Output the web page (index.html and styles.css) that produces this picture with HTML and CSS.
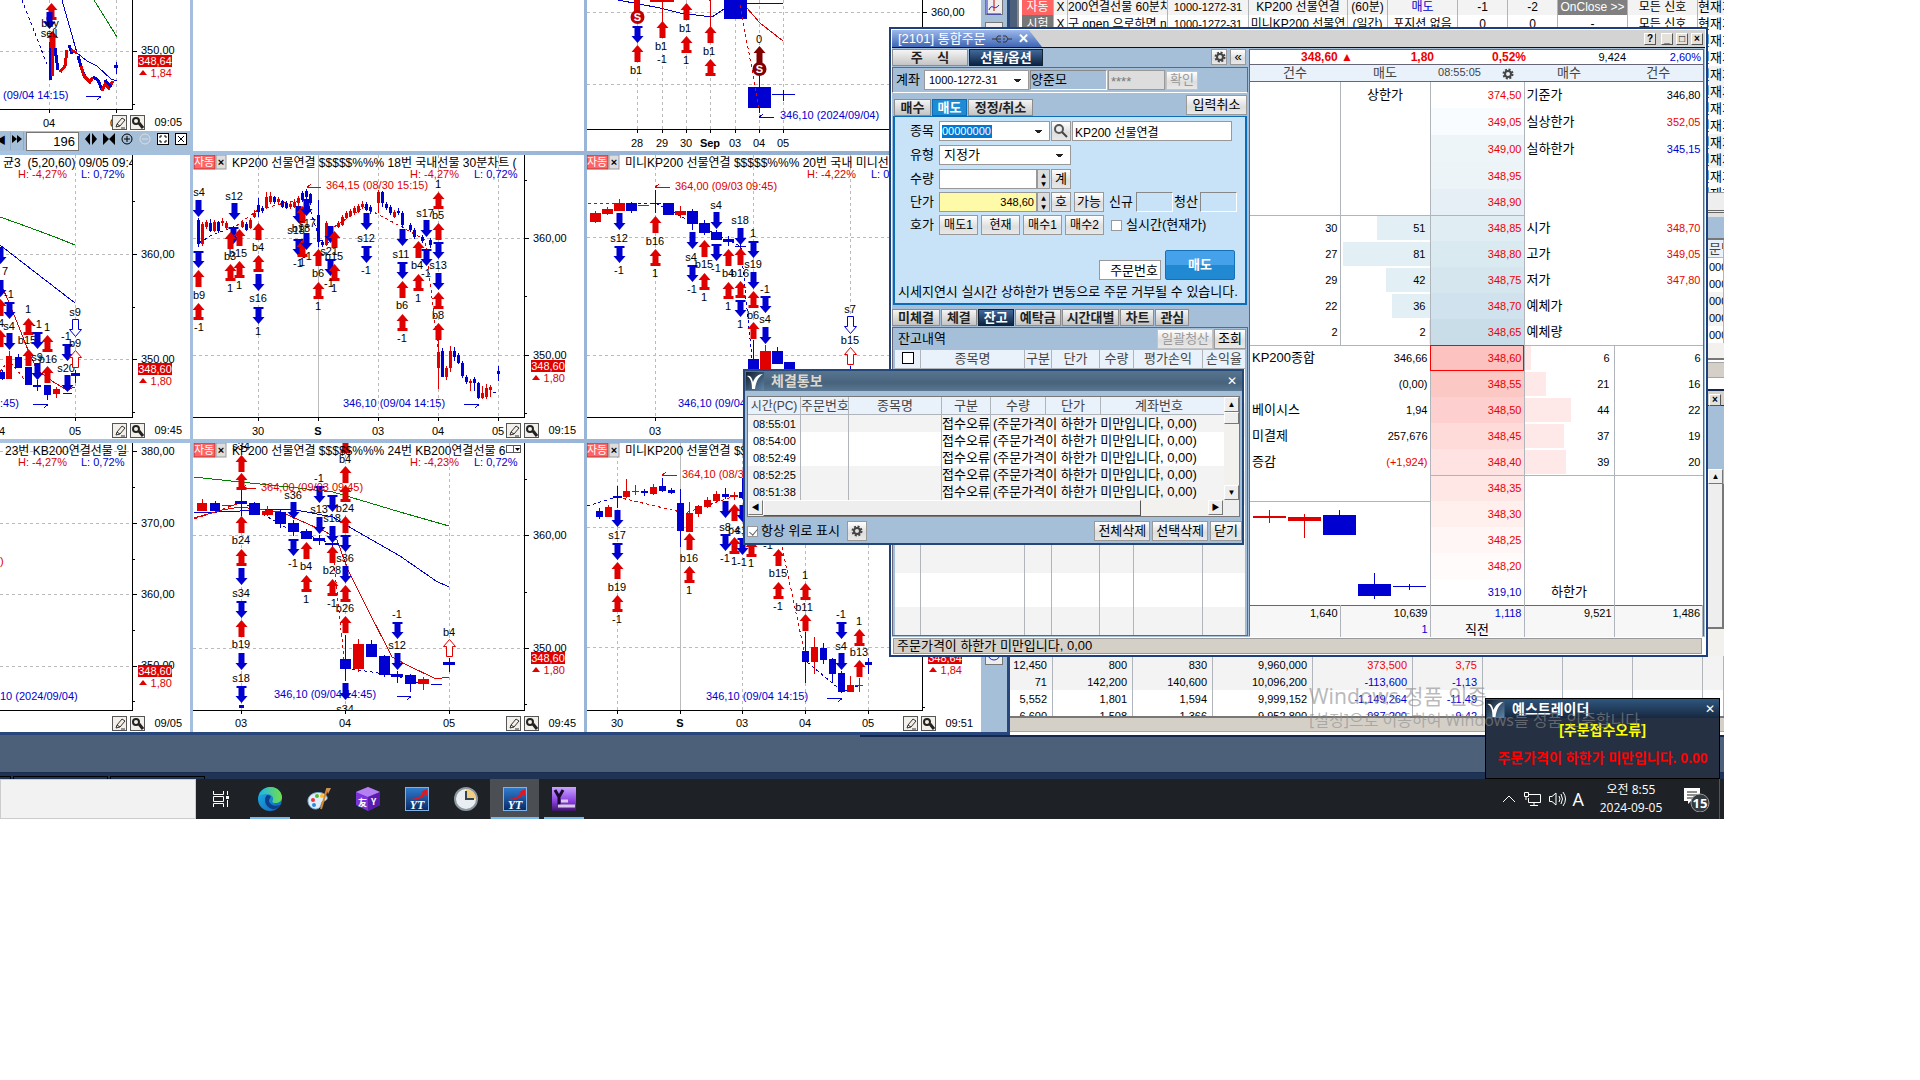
FILE: index.html
```html
<!DOCTYPE html>
<html lang="ko">
<head>
<meta charset="utf-8">
<title>통합주문</title>
<link rel="stylesheet" href="styles.css">
</head>
<body>
<svg width="0" height="0" class="defs" aria-hidden="true">
  <defs>
    <path id="m-u" d="M0 0 6 7H3V17H-3V7H-6Z"/>
    <path id="m-uf" d="M0 0 6 7H3V14H5V17H-5V14H-3V7H-6Z"/>
    <path id="m-d" d="M-3 0H3V10H6L0 17-6 10H-3Z"/>
    <path id="m-df" d="M-5 0H5V2H3V10H6L0 17-6 10H-3V2H-5Z"/>
    <g id="i-pencil" fill="none" stroke="#333"><path d="M3 11 4 8 9 2 12 4 7 10ZM4 8 7 10M8 12H12"/></g>
    <g id="i-mag" fill="none" stroke="#222"><circle cx="5" cy="5" r="3" stroke-width="2"/><path d="M8 7 12 12" stroke-width="3"/></g>
    <g id="i-gear"><circle cx="8" cy="8" r="3" fill="none" stroke="#444" stroke-width="2"/><circle cx="8" cy="8" r="4.500" fill="none" stroke="#444" stroke-width="2" stroke-dasharray="2 1.530"/></g>
    <linearGradient id="g-logo" x2="1" y2="1"><stop offset="0" stop-color="#111c2a"/><stop offset="1" stop-color="#5f87ad"/></linearGradient>
    <symbol id="i-logo" viewBox="0 0 18 18"><rect width="18" height="18" fill="url(#g-logo)"/><path d="M1 4C5 3 6 7 7 10 9 5 12 2 17 2 12 5 10 10 9 17H6C6 11 5 6 1 4Z" fill="#fff"/></symbol>
    <linearGradient id="g-yt" x2="0" y2="1"><stop offset="0" stop-color="#2f7dd0"/><stop offset="1" stop-color="#0a2a66"/></linearGradient>
    <symbol id="i-yt" viewBox="0 0 24 24"><rect x=".5" y=".5" width="23" height="23" fill="url(#g-yt)" stroke="#7fb2e6"/><path d="M5 12C12 12 16 9 18 6L16 5 22 2 22 9 20 7C17 12 11 14 5 12Z" fill="#e8141c"/><text x="12" y="22" text-anchor="middle" class="yt">YT</text></symbol>
    <linearGradient id="g-edge" x2="1" y2="1"><stop offset="0" stop-color="#1bb3e8"/><stop offset="1" stop-color="#1460b8"/></linearGradient>
    <linearGradient id="g-edge2" x2="1"><stop offset="0" stop-color="#23b5e6"/><stop offset="1" stop-color="#6fe04a"/></linearGradient>
    <linearGradient id="g-ps" x2="0" y2="1"><stop offset="0" stop-color="#c9a4ff"/><stop offset=".6" stop-color="#8a3fe0"/><stop offset="1" stop-color="#3c1466"/></linearGradient>
  </defs>
</svg>

<main class="screen">
<div class="desktop">

  <section class="win table-win">
    <table class="grid balances">
      <colgroup><col class="w193"><col class="w80"><col class="w80"><col class="w100"><col class="w100"><col class="w70"><col class="w80"><col class="w70"><col class="w70"><col></colgroup>
      <tr class="alt"><td>12,450<td>800<td>830<td>9,960,000<td class="red">373,500<td class="red">3,75<td><td><td><td></tr>
      <tr class="alt"><td>71<td>142,200<td>140,600<td>10,096,200<td class="blue">-113,600<td class="blue">-1,13<td><td><td><td></tr>
      <tr><td>5,552<td>1,801<td>1,594<td>9,999,152<td class="blue">-1,149,264<td class="blue">-11,49<td><td><td><td></tr>
      <tr><td>6,600<td>1,508<td>1,366<td>9,952,800<td class="blue">-987,200<td class="blue">-9,42<td><td><td><td></tr>
    </table>
    <div class="beige-bar"></div>
  </section>

  <section class="win edge-win">
    <div class="edge-title"><button class="cap" aria-label="닫기">×</button></div>
    <div class="edge-body"></div>
    <button class="scroll-btn" aria-label="위로">▲</button>
    <div class="edge-thumb"></div>
    <div class="edge-track"></div>
  </section>

  <section class="win orders-win">
    <div class="orders-top"></div>
    <table class="grid orders">
      <tr><th>문번</th></tr><tr><td>000</td></tr><tr><td>000</td></tr><tr class="alt"><td>000</td></tr><tr class="alt"><td>000</td></tr><tr><td>000</td></tr>
    </table>
    <div class="edge-track short"></div>
    <div class="beige-bar"></div>
  </section>

  <section class="win strategy-win">
    <table class="grid strategy">
      <colgroup><col class="w32"><col class="w14"><col class="w100"><col class="w81"><col class="w99"><col class="w40"><col class="w70"><col class="w50"><col class="w50"><col class="w70"><col class="w70"><col></colgroup>
      <tbody id="strategy"></tbody>
    </table>
    <div class="hbar"></div>
  </section>

  <section class="win chart-win">
    <div class="panes" id="panes">
      <article class="pane" data-pane="a1">
        <div class="pane-tools"><button aria-label="그리기"><svg width="13" height="13"><use href="#i-pencil"/></svg></button><button aria-label="확대"><svg width="13" height="13"><use href="#i-mag"/></svg></button><time>09:05</time></div>
        <div class="zoombar">
          <button aria-label="이전">◀</button><button class="sep" aria-label="다음"><svg width="12" height="14"><path d="M1 3V11L6 7ZM6 3V11L11 7Z"/></svg></button>
          <input value="196" aria-label="봉 개수">
          <button aria-label="넓게"><svg width="12" height="14"><path d="M5 1V13L0 7ZM7 1V13L12 7Z"/></svg></button>
          <button aria-label="좁게"><svg width="12" height="14"><path d="M0 1V13L6 7ZM12 1V13L6 7Z"/></svg></button>
          <button aria-label="확대"><svg width="12" height="14"><circle cx="6" cy="7" r="5" fill="none" stroke="#000"/><path d="M3 7H9M6 4V10" stroke="#000"/></svg></button>
          <button aria-label="축소" disabled><svg width="12" height="14"><circle cx="6" cy="7" r="5" fill="none" stroke="#ddd"/><path d="M3 7H9" stroke="#ddd"/></svg></button>
          <button aria-label="맞춤"><svg width="12" height="14"><rect x=".5" y="1.500" width="11" height="11" fill="#fff" stroke="#000"/><path d="M3 4H5M3 4V6M9 4H7M9 4V6M3 10H5M3 10V8M9 10H7M9 10V8" stroke="#000"/></svg></button>
          <button aria-label="닫기"><svg width="12" height="14"><rect x=".5" y="1.500" width="11" height="11" fill="#fff" stroke="#000"/><path d="M3 4 9 10M9 4 3 10" stroke="#000"/></svg></button>
        </div>
      </article>
      <article class="pane"></article>
      <article class="pane" data-pane="c1"></article>
      <article class="pane" data-pane="a2" data-time="09:45"></article>
      <article class="pane" data-pane="b2" data-time="09:15"></article>
      <article class="pane" data-pane="c2"></article>
      <article class="pane" data-pane="a3" data-time="09/05"></article>
      <article class="pane" data-pane="b3" data-time="09:45"></article>
      <article class="pane" data-pane="c3" data-time="09:51"></article>
    </div>
    <aside class="side">
      <button aria-label="차트 도구"><svg width="16" height="16"><path d="M1 0V14H15M3 10C6 2 8 12 13 5" fill="none" stroke="#22c"/><path d="M8 0V11" stroke="#c00"/></svg></button>
      <button aria-label="도구"></button>
      <button class="last" aria-label="시계"><svg width="16" height="16"><circle cx="8" cy="6" r="6" fill="none" stroke="#22c"/><path d="M8 2V7" stroke="#22c"/></svg></button>
    </aside>
  </section>

  <section class="win order-win">
    <header class="titlebar">
      <h1 class="tab-title">[2101] 통합주문 <svg width="20" height="10"><path d="M0 5H4M16 5H20M9 2H6L4 5 6 8H9M5 5H9M11 2H14L16 5 14 8H11M11 5H13" fill="none" stroke="#333"/></svg><button aria-label="탭 닫기">✕</button></h1>
      <div class="caps"><button class="cap" aria-label="도움말">?</button><button class="cap" aria-label="최소화">_</button><button class="cap" aria-label="최대화">□</button><button class="cap" aria-label="닫기">×</button></div>
    </header>
    <div class="order-main">
      <div class="ticket">
        <nav class="modes"><button class="tab w76">주&nbsp;&nbsp;&nbsp;&nbsp;식</button><button class="tab navy w74">선물/옵션</button><span class="grow"></span>
          <button class="btn ico" aria-label="설정"><svg width="16" height="16"><use href="#i-gear"/></svg></button><button class="btn ico" aria-label="접기">«</button></nav>
        <form class="account">
          <label for="acct">계좌</label><select id="acct" class="w105"><option>1000-1272-31</option></select><output class="sunken w77">양준모</output><input class="pw" type="text" value="****" aria-label="비밀번호" disabled><button type="button" class="btn" disabled>확인</button>
        </form>
        <nav class="sides"><button class="tab w37">매수</button><button class="tab sky w35">매도</button><button class="tab w65">정정/취소</button><span class="grow"></span><button class="btn cancel">입력취소</button></nav>
        <form class="entry">
          <div class="row"><label for="sym">종목</label><select id="sym" class="w111 sel"><option>00000000</option></select><button type="button" class="btn sq" aria-label="검색"><svg width="16" height="16"><circle cx="6" cy="6" r="4" fill="#eee" stroke="#555" stroke-width="2"/><path d="M9 9 14 14" stroke="#444" stroke-width="2"/></svg></button><input class="name" value="KP200 선물연결" aria-label="종목명"></div>
          <div class="row"><label for="kind">유형</label><select id="kind" class="w132"><option>지정가</option></select></div>
          <div class="row"><label for="qty">수량</label><span class="spin"><input id="qty"><i>▲<br>▼</i></span><button type="button" class="btn sq">계</button></div>
          <div class="row"><label for="px">단가</label><span class="spin"><input id="px" class="yellow" value="348,60"><i>▲<br>▼</i></span><button type="button" class="btn sq">호</button><button type="button" class="btn mid">가능</button><span class="lab">신규</span><output class="sunken w37"></output><span class="lab2">청산</span><output class="sunken w37"></output></div>
          <div class="row quick"><label>호가</label><button type="button" class="btn w39">매도1</button><button type="button" class="btn w39">현재</button><button type="button" class="btn w39">매수1</button><button type="button" class="btn w39">매수2</button><label class="live"><input type="checkbox">실시간(현재가)</label></div>
          <div class="submit"><output>주문번호</output><button type="button">매도</button></div>
          <p>시세지연시 실시간 상하한가 변동으로 주문 거부될 수 있습니다.</p>
        </form>
        <nav class="subtabs"><button class="tab">미체결</button><button class="tab">체결</button><button class="tab navy">잔고</button><button class="tab">예탁금</button><button class="tab">시간대별</button><button class="tab">차트</button><button class="tab">관심</button></nav>
        <div class="holdings">
          <div class="hold-head"><h2>잔고내역</h2><button class="btn" disabled>일괄청산</button><button class="btn">조회</button></div>
          <table class="grid hold">
            <colgroup><col class="w26"><col class="w104"><col class="w27"><col class="w48"><col class="w34"><col class="w69"><col></colgroup>
            <thead><tr><th><input type="checkbox" aria-label="전체 선택"></th><th>종목명</th><th>구분</th><th>단가</th><th>수량</th><th>평가손익</th><th>손익율</th></tr></thead>
            <tbody id="hold"></tbody>
          </table>
        </div>
      </div>
      <div class="book">
        <div class="quote"><b>348,60 ▲</b><b>1,80</b><b>0,52%</b><span>9,424</span><span class="blue">2,60%</span></div>
        <table class="ladder">
          <colgroup><col class="w90"><col class="w90"><col class="w94"><col class="w90"><col></colgroup>
          <thead><tr><th>건수</th><th>매도</th><th class="clock">08:55:05 <svg width="16" height="16"><use href="#i-gear"/></svg></th><th>매수</th><th>건수</th></tr></thead>
          <tbody id="ladder"></tbody>
          <tfoot><tr><td>1,640</td><td>10,639</td><td class="blue">1,118</td><td>9,521</td><td>1,486</td></tr><tr><td></td><td class="blue">1</td><td class="mid">직전</td><td></td><td></td></tr></tfoot>
        </table>
      </div>
    </div>
    <footer class="status">주문가격이 하한가 미만입니다, 0,00</footer>
  </section>

  <section class="win popup">
    <header><svg width="18" height="18"><use href="#i-logo"/></svg><h2>체결통보</h2><button aria-label="닫기">✕</button></header>
    <div class="popup-box">
      <div class="popup-rows">
        <table class="grid fills">
          <colgroup><col class="w53"><col class="w48"><col class="w93"><col class="w49"><col class="w55"><col class="w55"><col></colgroup>
          <thead><tr><th>시간(PC)</th><th>주문번호</th><th>종목명</th><th>구분</th><th>수량</th><th>단가</th><th>계좌번호</th></tr></thead>
          <tbody id="fills"></tbody>
        </table>
        <div class="vscroll"><button class="scroll-btn" aria-label="위로">▲</button><i></i><button class="scroll-btn" aria-label="아래로">▼</button></div>
      </div>
      <div class="hscroll"><button class="scroll-btn" aria-label="왼쪽">◀</button><i></i><span></span><button class="scroll-btn" aria-label="오른쪽">▶</button><b></b></div>
    </div>
    <footer><label><input type="checkbox" checked>항상 위로 표시</label><button class="btn gear" aria-label="설정"><svg width="16" height="16"><use href="#i-gear"/></svg></button><span class="grow"></span><button class="btn">전체삭제</button><button class="btn">선택삭제</button><button class="btn">닫기</button></footer>
  </section>

  <section class="win toast">
    <header><svg width="19" height="18"><use href="#i-logo"/></svg><h2>예스트레이더</h2><button aria-label="닫기">✕</button></header>
    <strong>[주문접수오류]</strong>
    <p>주문가격이 하한가 미만입니다. 0.00</p>
  </section>

  <div class="watermark"><b>Windows 정품 인증</b><span>[설정]으로 이동하여 Windows를 정품 인증합니다.</span></div>
  <div class="app-tabs"><i></i><i></i><i></i></div>
</div>

<footer class="taskbar">
  <input class="search" aria-label="검색">
  <button aria-label="작업 보기"><svg width="24" height="24"><g fill="none" stroke="#fff"><path d="M4.500 4V7.500H14.500V4M4.500 20V16.500H14.500V20M4.500 9.500H14.500V14.500H4.500ZM18.500 4V8M18.500 13V20"/></g><rect x="17" y="9" width="3" height="3" fill="#fff"/></svg></button>
  <button class="open" aria-label="Edge"><svg width="24" height="24"><circle cx="12" cy="12" r="12" fill="url(#g-edge)"/><path d="M1 9C3 2 9 0 13 0 20 0 24 6 24 10 24 14 21 16 17 16 14 16 14 14 15 13 16 10 13 7 9 7 5 7 2 8 1 9Z" fill="url(#g-edge2)"/><path d="M9 8C5 12 7 20 14 22 18 23 21 20 22 18 17 20 12 18 11 14 11 12 12 11 13 10 12 8 10 8 9 8Z" fill="#0c3f8c"/></svg></button>
  <button aria-label="그림판"><svg width="24" height="24"><path d="M1 15C0 8 8 4 15 6 21 8 22 13 17 14 14 14 15 17 13 20 10 24 2 22 1 15Z" fill="#dfeefa" stroke="#7aa6cc"/><circle cx="6" cy="13" r="2" fill="#e33"/><circle cx="10" cy="9" r="2" fill="#5b3"/><circle cx="7" cy="18" r="2" fill="#38d"/><circle cx="15" cy="9" r="2" fill="#fb2"/><path d="M20 2 14 22" stroke="#d9852c" stroke-width="2"/><path d="M19 1 24 1 21 7Z" fill="#c8935a"/></svg></button>
  <button aria-label="프로그램"><svg width="24" height="24"><path d="M12 0 24 5V18L12 24 0 18V5Z" fill="#7b35d8"/><path d="M12 0 24 5 12 10 0 5Z" fill="#b581f2"/><path d="M12 10V24L24 18V5Z" fill="#5a1cae"/><text x="2" y="19" class="cube">友</text><text x="15" y="18" class="cube">Y</text></svg></button>
  <button aria-label="YT"><svg width="24" height="24"><use href="#i-yt"/></svg></button>
  <button aria-label="시계"><svg width="24" height="24"><circle cx="12" cy="12" r="11" fill="#e9eef2" stroke="#8c979f" stroke-width="2"/><path d="M12 2A10 10 0 0 1 22 12H12Z" fill="#f0cf85"/><path d="M12 4V12H20" fill="none" stroke="#345" stroke-width="2"/></svg></button>
  <button class="open active" aria-label="YT"><svg width="24" height="24"><use href="#i-yt"/></svg></button>
  <button class="open" aria-label="Y Trader"><svg width="24" height="24"><rect width="24" height="24" fill="url(#g-ps)"/><path d="M3 3 7 10 11 3M7 10V18" fill="none" stroke="#1a0a30" stroke-width="3"/><path d="M9 14H16M6 19H23" stroke="#d9c8ee" stroke-width="3"/></svg></button>
  <div class="tray">
    <svg width="14" height="12"><path d="M1 9 7 3 13 9" fill="none" stroke="#fff"/></svg>
    <svg width="18" height="16"><path d="M6 3.500H17.500V11.500H5.500V7M11 12V14M7 14.500H15M1.500 1.500H5.500V5.500H1.500ZM3 6V9" fill="none" stroke="#fff"/></svg>
    <svg width="18" height="16"><path d="M1.500 5.500H4L8 2V14L4 10.500H1.500ZM11 5Q13 8 11 11M13 3Q16 8 13 13M15 1Q20 8 15 15" fill="none" stroke="#fff"/></svg>
    <span class="ime">A</span>
    <time>오전 8:55<br>2024-09-05</time>
    <svg width="30" height="26"><path d="M2 2H18V15H9L6 18V15H2Z" fill="#fff"/><path d="M5 6H15M5 9H15M5 12H12" stroke="#222"/><circle cx="18" cy="17" r="9" fill="#333b40" stroke="#999"/><text x="18" y="22" text-anchor="middle" class="num">15</text></svg>
  </div>
</footer>
</main>
<script src="app.js"></script>
</body>
</html>
```
FILE: styles.css
```css
* { box-sizing: border-box; }
body { margin: 0; background: #fff; color: #000; font: 13px/16px "Liberation Sans", "Noto Sans CJK KR", sans-serif; }
h1, h2, p { margin: 0; font-size: 13px; font-weight: 400; }
button, input, select, output { font: inherit; color: inherit; }
button { padding: 0; white-space: nowrap; }
.defs { position: absolute; }
.red { color: #e00; }
.blue { color: #0000d0; }
.grow { flex: 1; }

.screen { max-width: 1724px; }
.desktop { position: relative; min-height: 779px; overflow: hidden; background: linear-gradient(#4d6079 772px, #18294a 772px, #1f3354 773px); }
.win { position: absolute; overflow: hidden; background: #fff; }

.w14 { width: 14px; } .w26 { width: 26px; } .w27 { width: 27px; } .w32 { width: 32px; } .w34 { width: 34px; }
.w35 { width: 35px; } .w37 { width: 37px; } .w39 { width: 39px; } .w40 { width: 40px; } .w48 { width: 48px; }
.w49 { width: 49px; } .w50 { width: 50px; } .w53 { width: 53px; } .w55 { width: 55px; } .w65 { width: 65px; }
.w69 { width: 69px; } .w70 { width: 70px; } .w74 { width: 74px; } .w76 { width: 76px; } .w77 { width: 77px; }
.w80 { width: 80px; } .w81 { width: 81px; } .w90 { width: 90px; } .w93 { width: 93px; } .w94 { width: 94px; }
.w99 { width: 99px; } .w100 { width: 100px; } .w104 { width: 104px; } .w105 { width: 105px; } .w111 { width: 111px; }
.w132 { width: 132px; } .w193 { width: 193px; }

.grid { width: 100%; table-layout: fixed; border-collapse: separate; border-spacing: 0; background: #fff; }
.grid td, .grid th { height: 17px; padding: 0; overflow: hidden; border-right: 1px solid #b0b4bb; font-weight: 400; line-height: 16px; white-space: nowrap; }
.grid th { height: 18px; border-bottom: 1px solid #b0b4bb; background: #e9f1fb; color: #444; text-align: center; }
.alt { background: #f3f3f3; }
.beige-bar { height: 16px; margin: 2px 0 4px; border: 2px solid #a5a5a5; border-width: 1px 0; background: #d4d0c8; }

.table-win { left: 860px; right: 0; top: 656px; height: 81px; border-bottom: 2px solid #14284f; }
.balances td { padding-right: 5px; font-size: 11px; text-align: right; }
.table-win .beige-bar { position: relative; margin-top: -8px; border-top: 2px solid #777; }
.edge-win { left: 1700px; right: 0; top: 389px; height: 267px; border-top: 2px solid #14284f; background: #a5bfd9; display: flex; flex-direction: column; padding-left: 8px; }
.edge-title { height: 15px; padding-left: 1px; border-bottom: 1px solid #333; background: #d4d0c8; }
.edge-body { height: 63px; }
.edge-thumb { height: 145px; background: #eee; border-right: 2px solid #777; border-bottom: 2px solid #777; }
.edge-track { flex: 1; background: #f3f1ee; }
.edge-track.short { height: 17px; flex: none; border-bottom: 2px solid #777; }
.scroll-btn { width: 15px; height: 15px; border: 1px solid; border-color: #fff #777 #777 #fff; background: #eee; font-size: 8px; line-height: 12px; }
.orders-win { left: 1700px; right: 0; top: 213px; height: 176px; }
.orders-top { height: 27px; border-top: 4px solid #e0e0e0; border-bottom: 2px solid #777; background: #a5bfd9; }
.orders td, .orders th { padding-left: 9px; text-align: left; }
.orders td { font-size: 11px; }
.strategy-win { left: 1017px; right: 0; top: -2px; height: 215px; border-left: 2px solid #888; padding-left: 3px; }
.strategy td { font-size: 12px; text-align: center; }
.strategy td:nth-child(4) { font-size: 11px; }
.strategy td:last-child { font-size: 13px; text-align: left; border: 0; }
.strategy .on { background: #ff6464; color: #fff; }
.strategy .test { background: #777; color: #fff; }
.strategy .wide { text-align: left; }
.strategy .close { background: #808080; color: #fff; }
.strategy-win .hbar { position: absolute; left: 0; right: 0; top: 194px; height: 21px; border-top: 1px solid #999; border-bottom: 3px double #666; background: #eee; }

.chart-win { left: 0; top: 0; width: 1010px; height: 735px; display: flex; border-right: 3px solid #27477d; border-bottom: 3px solid #27477d; }
.panes { display: grid; grid-template-columns: 190px 391px 394px; grid-template-rows: 151px 284px 289px; gap: 4px 3px; background: linear-gradient(90deg, #a9c4e2, #8fabcf); }
.pane { position: relative; overflow: hidden; background: #fff; }
.pane > svg { display: block; }
.pane text { font: 11px "Liberation Sans", "Noto Sans CJK KR", sans-serif; }
.pane text.title { font-size: 12px; }
.pane text.bold { font-weight: 700; }
.pane-tools { position: absolute; right: 8px; bottom: 1px; display: flex; gap: 3px; align-items: center; background: #fff; }
.pane-tools button { display: flex; width: 15px; height: 15px; padding: 0; border: 1px solid #555; background: #f3f0ea; }
.pane-tools time { min-width: 28px; margin-left: 6px; font-size: 11px; text-align: right; }
[data-pane=a1] .pane-tools { bottom: 21px; }
.zoombar { position: absolute; left: 0; right: 0; bottom: 0; height: 20px; display: flex; align-items: center; gap: 6px; padding-right: 4px; background: #a5bfd9; }
.zoombar button { width: 12px; height: 18px; border: 0; background: none; font-size: 10px; }
.zoombar button:first-child { width: 8px; margin-left: -4px; }
.zoombar .sep { width: 20px; margin-right: -4px; border: 1px solid #8ea9c6; border-width: 0 1px; }
.zoombar input { width: 53px; height: 19px; padding: 0 3px; border: 1px solid #777; text-align: right; }
.side { display: flex; flex-direction: column; gap: 7px; width: 26px; padding: 0 4px 67px; background: #a5bfd9; }
.side button { width: 18px; height: 18px; border: 1px solid #777; background: #eee; }
.side button:first-child { height: 15px; border-top: 0; }
.side .last { margin-top: auto; }

.btn { border: 1px solid #999; background: linear-gradient(#fff, #dedede 60%, #e8e8e8); height: 20px; display: flex; align-items: center; justify-content: center; }
.btn:disabled { color: #999; border-color: #c3c3c3; }
.tab { height: 17px; border: 1px solid #8c8c8c; background: linear-gradient(#f5f5f5, #c4c4c4); color: #222; font-weight: 700; line-height: 15px; }
.tab.navy { border-color: #123; background: linear-gradient(#41699c, #0d2340); color: #fff; }
.tab.sky { border-color: #0b6cb8; background: #1d8cd4; color: #fff; }

.order-win { left: 889px; top: 27px; width: 819px; height: 630px; display: flex; flex-direction: column; border: 2px solid #1d3f7c; background: #fff; padding: 1px; }
.titlebar { display: flex; justify-content: space-between; height: 18px; border-bottom: 1px solid #111; background: #d3d3d3; }
.tab-title { display: flex; align-items: center; gap: 6px; width: 150px; padding-left: 6px; background: linear-gradient(#9db8ea, #3f66b4); clip-path: polygon(0 0, 137px 0, 150px 100%, 0 100%); color: #fff; white-space: nowrap; }
.tab-title button { border: 0; background: none; font-weight: 700; }
.caps { display: flex; align-items: center; gap: 3px; padding-right: 2px; }
.cap { width: 12px; height: 12px; border: 1px solid; border-color: #fff #555 #555 #fff; background: #e4e1da; font-size: 10px; font-weight: 700; line-height: 8px; }
.caps .cap:first-child { margin-right: 2px; }
.order-main { display: flex; flex: 1; min-height: 0; padding: 1px 1px 1px 0; background: #a5bfd9; }
.ticket { display: flex; flex-direction: column; width: 356px; }
.modes { display: flex; height: 18px; gap: 1px; }
.modes .ico { width: 16px; height: 16px; margin-right: 2px; }
.account { display: flex; align-items: center; height: 26px; padding-left: 3px; border: 1px solid #667; border-bottom-color: #fff; gap: 1px; }
.account label { width: 27px; }
.account select, .sel { font-size: 11px; }
select, input { border: 1px solid #999; background: #fff; height: 20px; padding: 0 4px; }
select { appearance: none; padding-right: 14px; border-radius: 0; background: linear-gradient(#222, #222) no-repeat right 7px top 8px / 7px 1px, linear-gradient(#222, #222) no-repeat right 8px top 9px / 5px 1px, linear-gradient(#222, #222) no-repeat right 9px top 10px / 3px 1px, #fff; }
.sunken { display: block; height: 20px; border: 1px solid; border-color: #888 #fff #fff #888; padding-top: 1px; }
.account .pw { width: 57px; background: #ddd; color: #777; padding: 3px 2px 0; }
.account .btn { width: 32px; height: 19px; }
.sides { display: flex; align-items: flex-end; gap: 1px; height: 23px; padding: 0 1px 0 2px; }
.sides .cancel { width: 61px; align-self: flex-end; margin-bottom: 1px; }
.entry { height: 189px; margin: 0 1px 0 1px; padding: 4px 3px 0; border: 2px solid #0b6cb8; border-width: 1px 2px 2px; background: #c8e3f8; }
.row { display: flex; align-items: center; height: 20px; margin-bottom: 4px; }
.row:nth-child(n+3) { margin-bottom: 3px; }
.row > label:first-child { width: 41px; padding-left: 12px; }
.row .sq { width: 20px; margin-left: 1px; }
.row .name { width: 160px; margin-left: 1px; padding-left: 2px; font-size: 12px; }
.row .mid { width: 30px; margin: 0 5px 0 3px; }
.row .lab { width: 27px; } .row .lab2 { width: 27px; padding-left: 1px; }
.sel { color: #fff; background: linear-gradient(#222, #222) no-repeat right 7px top 8px / 7px 1px, linear-gradient(#222, #222) no-repeat right 8px top 9px / 5px 1px, linear-gradient(#222, #222) no-repeat right 9px top 10px / 3px 1px, linear-gradient(#0078d7, #0078d7) no-repeat 2px center / 50px 13px, #fff; padding-left: 2px; }
.spin { display: flex; width: 111px; }
.spin input { width: 98px; padding-right: 2px; font-size: 11px; text-align: right; }
.spin .yellow { background: #fffaa8; }
.spin i { width: 13px; border: 1px solid #999; background: #ddd; font: 6px/9px "DejaVu Sans"; text-align: center; }
.quick .btn { margin-right: 3px; font-size: 12px; }
.live { display: flex; align-items: center; gap: 4px; margin-left: 4px; }
.live input { width: 11px; height: 11px; margin: 0; appearance: none; padding: 0; }
.submit { display: flex; justify-content: flex-end; align-items: flex-end; gap: 4px; height: 34px; margin-top: 11px; padding-right: 7px; }
.submit output { width: 62px; height: 20px; padding: 2px 2px 0 0; border: 1px solid #999; background: #fff; text-align: right; }
.submit button { width: 70px; height: 30px; border: 1px solid #1470b8; border-radius: 2px; background: linear-gradient(#45a2ea 50%, #2089d2 50%); color: #fff; font-weight: 700; }
.entry p { padding-top: 4px; white-space: nowrap; }
.subtabs { display: flex; gap: 1px; margin-top: 4px; height: 18px; }
.subtabs .tab { padding: 0 5px; }
.subtabs .tab:nth-child(n+4) { padding: 0 4px; }
.holdings { flex: 1; display: flex; flex-direction: column; min-height: 0; overflow: hidden; padding: 1px 1px 1px 2px; border: 1px solid #667; }
.hold-head { display: flex; align-items: center; gap: 1px; margin-bottom: 1px; }
.hold-head h2 { flex: 1; padding-left: 3px; }
.hold-head .btn { padding: 0 3px; }
.hold input { appearance: none; width: 12px; height: 12px; margin: 2px 0 0; border: 1px solid #000; padding: 0; }
.hold td { height: 34px; }
.hold tr:nth-child(even) td { background: #f3f3f3; }
.book { flex: 1; background: #fff; margin-left: 1px; border: 1px solid #667; }
.quote { display: grid; grid-template-columns: 103px 81px 92px 100px 1fr; height: 15px; line-height: 15px; padding-right: 2px; border-bottom: 1px solid #667; font-size: 11px; text-align: right; }
.quote b { color: #e00; font-size: 12px; }
.ladder { width: 100%; table-layout: fixed; border-collapse: collapse; }
.ladder th { height: 16px; padding: 0; border-bottom: 1px solid #667; background: #e9f1fb; color: #444; font-weight: 400; line-height: 14px; }
.ladder .clock { font-size: 11px; }
.ladder th svg { height: 14px; margin-left: 16px; vertical-align: -4px; }
.ladder td { height: 26px; padding: 0 2px; font-size: 11px; text-align: right; }
.ladder .tall td { height: 27px; }
.ladder td.px { border: 1px solid #b0b4bb; border-width: 0 1px; color: #e00; }
.ladder td.now { outline: 1px solid #f00; outline-offset: -1px; }
.ladder td.px.low { color: #0000d0; }
.ladder td.l { font-size: 13px; text-align: left; }
.ladder td.v { border-right: 1px solid #b0b4bb; }
.ladder td.pad { padding-right: 4px; }
.ladder .line td { border-bottom: 1px solid #b0b4bb; }
.ladder td.mid { font-size: 13px; text-align: center; }
.ladder td.bb { border-bottom: 1px solid #b0b4bb; }
.ladder td.bar { background: linear-gradient(var(--c), var(--c)) no-repeat var(--side) center / var(--w) 24px; }
.ladder td.candles { padding: 0; vertical-align: top; }
.candles svg { display: block; }
.ladder tfoot td { height: 16px; background: #f7f7f7; border-right: 1px solid #b0b4bb; line-height: 15px; }
.ladder tfoot tr:first-child td { border-top: 1px solid #667; }
.status { height: 16px; border: 1px solid #999; background: #d4d0c8; line-height: 13px; padding-left: 3px; margin: 1px 3px 0 1px; }

.popup { left: 743px; top: 369px; width: 501px; height: 176px; border: 2px solid #24477a; background: #a5bfd9; }
.popup > header, .toast > header { display: flex; align-items: center; gap: 7px; height: 20px; padding: 1px; background: linear-gradient(#57748f, #48637c 60%, #5a7894); color: #ddd8cc; }
.popup h2, .toast h2 { flex: 1; font-size: 14px; font-weight: 700; }
.popup header button, .toast header button { width: 18px; border: 0; background: none; color: #fff; font-size: 12px; }
.popup-box { margin: 5px 2px 0; border: 1px solid #777; background: #fff; }
.popup-rows { display: flex; }
.fills th:first-child { font-size: 12px; }
.fills td:first-child { padding-left: 5px; font-size: 11px; }
.fills td:last-child { padding-left: 2px; border: 0; }
.fills th:last-child { padding-right: 7px; border-right: 0; }
.fills tr.even td { background: #f3f3f3; }
.vscroll { display: flex; flex-direction: column; width: 15px; flex: none; background: #f3f1ee; }
.vscroll i { height: 12px; border: 1px solid; border-color: #fff #777 #777 #fff; background: #eee; }
.vscroll .scroll-btn:last-child { margin-top: auto; }
.hscroll { display: flex; height: 16px; background: #f3f1ee; }
.hscroll i { width: 378px; background: #eee; border: 1px solid; border-color: #fff #555 #555 #fff; }
.hscroll span { flex: 1; }
.hscroll b { width: 16px; background: #eee; }
.popup footer { display: flex; align-items: center; gap: 2px; margin: 4px 0 0 2px; }
.popup footer label { display: flex; align-items: center; gap: 3px; }
.popup footer input { position: relative; appearance: none; width: 11px; height: 11px; margin: 0; padding: 0; }
.popup footer input::after { content: ""; position: absolute; left: 3px; top: 0; width: 4px; height: 7px; border: solid #666; border-width: 0 1px 1px 0; transform: rotate(40deg); }
.popup footer .btn { padding: 0 3px; }
.popup footer .gear { width: 20px; padding: 0; margin-left: 5px; }

.toast { left: 1485px; top: 698px; width: 235px; height: 81px; border: 1px solid #000; background: #253043; text-align: center; }
.toast > header { height: 19px; padding: 0; background: linear-gradient(#2f567e, #17283f); color: #fff; text-align: left; }
.toast strong { display: block; margin-top: 4px; color: #ff0; font-size: 14px; }
.toast p { margin-top: 12px; color: #f00; font-size: 14px; font-weight: 700; }
.watermark { position: absolute; left: 1309px; top: 682px; display: flex; flex-direction: column; color: rgba(140, 140, 140, .6); font-family: "Noto Sans", "Noto Sans CJK KR", sans-serif; white-space: nowrap; }
.watermark b { font-size: 21px; font-weight: 400; line-height: 28px; }
.watermark span { font-size: 16px; line-height: 20px; }
.app-tabs { position: absolute; left: 0; bottom: 0; display: flex; gap: 2px; }
.app-tabs i { width: 95px; height: 3px; border: 1px solid #000; border-bottom: 0; }
.app-tabs i:first-child { width: 11px; border-left: 0; }

.taskbar { display: flex; align-items: stretch; height: 40px; background: #1e2227; color: #fff; }
.taskbar .search { width: 196px; height: 40px; border: 1px solid #ccc; background: #f2f2f2; }
.taskbar > button { display: flex; align-items: center; justify-content: center; width: 49px; border: 0; background: none; color: #fff; }
.taskbar .open { background: linear-gradient(#76b9ed, #76b9ed) no-repeat center bottom / 40px 2px; }
.taskbar .active { background: linear-gradient(#76b9ed, #76b9ed) no-repeat center bottom / 48px 2px, #4b4e52; }
.yt { font: italic 700 12px "Liberation Serif", serif; fill: #fff; }
.cube { font: 700 9px "Noto Sans CJK KR", sans-serif; fill: #fff; }
.num { font: 700 13px "Open Sans", sans-serif; fill: #fff; }
.tray { display: flex; align-items: center; gap: 7px; margin-left: auto; padding-right: 7px; margin-right: 4px; border-right: 1px solid #555; font-family: "Open Sans", "Noto Sans CJK KR", sans-serif; }
.tray .ime { font-size: 18px; }
.tray time { width: 80px; margin-right: 4px; font-size: 12px; line-height: 18px; text-align: center; }
```
FILE: app.js
```
const RED = '#e00000', BLUE = '#0000d0';

// Each pane lists its drawing in window coordinates; box is [left, top, width, height].
const panes = {
  a1: { box: [0, 0, 190, 151], axis: [132, 109], h: [51], v: [49, 116], ticks: [104],
    lines: [['blue', '62,0 77,53 87,61 97,66 111,79 117,81'], ['green', '94,0 117,37'], ['blue', '22,0 48,67', 1]],
    thick: [['b', '50,42 50,80'], ['r', '52,40 52,76'], ['b', '55,48 58,70'], ['r', '60,72 65,66 67,50'], ['b', '69,45 72,54'], ['r', '71,50 77,53'], ['b', '78,56 82,70 87,80'], ['r', '81,66 84,76 90,82 93,77'], ['b', '93,77 98,80 102,90'], ['r', '102,91 105,84 109,88 113,81'], ['b', '105,80 111,87']],
    candles: 'b116,65,68,62,74,4',
    marks: 'uf@51,3 d@49,12 u@52,31 buy@50,27 sell@49,37', x: '04@49 0@113', xy: 127, ys: '350,00@54', price: [138, 55, '348,64', '1,84'],
    notes: [[3, 99, '(09/04 14:15)', BLUE]], arrows: [[86, 101, 96, BLUE]] },
  c1: { box: [587, 0, 394, 151], axis: [922, 129], h: [12, 84], v: [637, 662, 686, 710, 735, 759, 783], ticks: [12],
    lines: [['blue', '618,0 660,8 680,13 712,17 730,5 760,3 783,3'], ['red', '740,0 760,23 783,41']], over: [['red', '740,5 759,107', 1]],
    candles: 'r662,0,2,0,22,24 r710,0,0,0,27,2 b735,0,19,0,19,23 b759,87,108,76,113,23 b783,94,95,90,101,23 r637,0,11,0,11,6',
    marks: 'df@637,26 u@637,45 b1@636,74 u@662,21 b1@661,50 -1@662,63 u@686,3 b1@685,32 uf@686,36 1@686,64 u@710,26 b1@709,55 uf@710,59 0@759,43 uk@759,46',
    stops: [[637, 17, '#c00000'], [759, 69, '#800000']],
    x: '28@637 29@662 30@686 Sep@710 03@735 04@759 05@783', xy: 147, ys: '360,00@16',
    notes: [[780, 119, '346,10 (2024/09/04)', BLUE]], arrows: [[774, 759, 117, BLUE]] },
  a2: { box: [0, 155, 190, 284], axis: [132, 417], h: [254, 359], v: [75], ticks: [201, 307, 412],
    lines: [['green', '0,217 28,227 55,237 75,245'], ['blue', '0,245 18,259 75,303'], ['red', '0,283 9,302 28,350 37,370 55,383 67,390 75,387'], ['red', '0,372 9,360 28,384', 1]],
    candles: 'r9,356,379,351,379,6 b18,357,368,354,368,7 b28,367,385,367,385,7 b37,385,387,380,391,8 b47,385,395,385,400,7 r56,389,394,387,398,7 b67,393,394,393,394,9 b75,373,376,370,383,9 b2,372,379,370,380,5',
    marks: 'd@0,247 7@5,275 d@0,280 u@0,299 -1@9,298 df@9,302 s4@9,330 d@9,333 4@1,327 u@0,330 1@28,313 uf@28,318 b15@27,344 u@28,349 -1@37,328 df@37,332 1@47,331 uf@47,335 s9@37,361 b16@48,363 d@37,363 u@47,366 -1@66,340 df@67,344 s20@66,372 d@67,375 s9@75,316 hd@75,319 b9@75,347 hu@75,350',
    title: [3, '균3  (5,20,60) 09/05 09:4'], hl: [18, 81, '4,27'], x: '4@2 05@75', xy: 435, ys: '360,00@258 350,00@363', price: [138, 363, '348,60', '1,80'],
    notes: [[0, 407, ':45)', BLUE]], arrows: [[33, 48, 404, BLUE]] },
  a3: { box: [0, 443, 190, 289], axis: [132, 710], h: [451, 523, 594, 666], v: [], ticks: [487, 559, 630, 701],
    candles: '', marks: '', title: [5, '23번 KB200연결선물 일'], hl: [18, 81, '4,27'], x: '', xy: 727, ys: '380,00@455 370,00@527 360,00@598 350,00@669', price: [138, 665, '348,60', '1,80'],
    notes: [[0, 700, '10 (2024/09/04)', BLUE], [0, 565, ')', RED]], arrows: [] },
  b2: { box: [193, 155, 391, 284], axis: [524, 417], h: [238, 355], v: [258, 378, 438, 498], solid: 318, ticks: [180, 296, 413],
    lines: [['blue', '199,243 212,235 236,226', 1], ['red', '236,226 258,210 288,202 307,200', 1], ['blue', '307,200 320,240 330,243', 1], ['red', '334,227 364,207 402,227 425,240 438,348', 1]],
    candles: 'b198,220,244,218,247 r202,224,244,222,246 r206,222,227,220,229 b210,223,231,219,232 r214,222,231,220,232 b218,222,231,221,233 r222,221,223,218,226 r226,223,228,221,230 r242,222,227,220,228 b246,224,230,222,231 r250,220,228,218,229 r254,213,217,210,218 b258,205,212,198,217 b262,208,211,206,213 r266,197,208,192,209 r270,196,202,192,204 b274,197,202,196,204 r278,199,202,197,204 b282,201,207,200,208 b286,203,208,201,209 r290,204,207,202,209 r294,202,207,199,208 r298,198,203,196,206 b302,193,200,191,202 b306,191,197,189,199 b310,194,203,193,205 b318,215,242,200,247 b322,242,245,240,247 r326,223,245,221,246 r338,223,227,221,228 r342,217,225,215,226 r346,213,218,211,219 r350,211,216,209,217 r354,208,213,206,215 r358,206,212,204,213 r362,204,207,201,209 b366,204,210,202,211 b370,207,211,205,214 r378,192,203,190,213 b382,192,203,191,207 b386,204,208,202,210 b390,207,213,205,215 r394,212,217,210,218 b398,211,213,208,215 b402,213,225,211,228 b410,225,230,223,232 b414,230,237,228,239 b422,237,241,235,243 b430,240,245,238,248 r438,352,368,340,389 b442,351,377,348,377 r446,368,377,366,380 r450,351,368,346,372 b454,351,357,347,361 b458,355,363,353,364 b462,363,376,361,378 b466,377,382,375,384 r470,381,383,379,391 b474,379,383,377,391 b478,383,398,382,399 r482,393,398,386,399 r486,388,397,384,399 r490,387,390,385,397 b494,392,393,392,393 b498,371,374,366,381',
    marks: 's4@199,196 d@198,200 df@198,251 u@198,270 b9@199,299 uf@198,303 -1@199,331 s12@234,200 d@234,203 df@233,227 u@230,232 u@239,229 b3@230,260 b15@238,257 uf@230,264 uf@239,261 1@230,292 1@239,289 u@258,223 b4@258,251 uf@258,255 d@258,274 s16@258,302 df@258,307 1@258,335 d@298,206 u@302,206 d@306,199 s18@296,234 b18@301,232 s17@307,227 df@298,239 uf@302,240 d@306,233 -1@298,267 1@302,266 -1@307,260 u@318,249 b6@318,277 uf@318,282 1@318,310 d@330,226 u@334,231 s21@329,255 b15@334,260 df@330,259 uf@334,264 -1@329,287 1@334,292 d@366,213 s12@366,242 df@366,246 -1@366,274 d@402,229 s11@401,258 df@402,262 u@402,281 b6@402,309 uf@402,314 -1@402,342 u@418,241 b4@417,269 uf@418,274 1@418,302 s17@425,217 d@426,220 df@426,249 -1@426,277 1@438,188 uf@438,192 b5@438,219 u@438,223 df@438,242 s13@438,269 d@438,273 uf@438,292 b8@438,319 u@438,323',
    title: [232, 'KP200 선물연결 $$$$$%%% 18번 국내선물 30분차트 ('], badge: 194, hl: [410, 474, '4,27'], x: '30@258 S@318 03@378 04@438 05@498', xy: 435, ys: '360,00@242 350,00@359', price: [531, 360, '348,60', '1,80'],
    notes: [[326, 189, '364,15 (08/30 15:15)', RED], [343, 407, '346,10 (09/04 14:15)', BLUE]], arrows: [[321, 307, 187, RED], [464, 479, 404, BLUE]] },
  b3: { box: [193, 443, 391, 289], axis: [524, 710], h: [535, 648], v: [241, 345, 449], ticks: [479, 592, 704],
    lines: [['green', '194,477 240,482 289,487 333,492 370,503 400,512 449,526'], ['blue', '194,513 240,511 259,509 296,510 333,517 351,528 400,556 436,581 449,587'], ['red', '194,518 222,510 240,507 281,512 326,532 337,540 348,570 363,600 392,657 407,665 436,679 449,677'], ['red', '194,519 240,503', 1], ['blue', '242,502 285,527 332,544', 1], ['red', '332,544 345,668', 1], ['blue', '346,668 397,676 422,684', 1]],
    candles: 'r202,503,511,499,511,10 b215,503,511,501,511,10 r228,505,506,505,506,12 b241,501,504,490,516,12 b254,503,515,502,515,11 r267,511,515,506,516,11 b280,512,524,510,528,11 b293,523,532,520,536,11 b306,531,539,529,539,11 b319,538,541,535,545,12 b332,543,545,540,547,14 b345,659,669,635,681,11 r358,644,669,639,672,11 b371,644,657,640,657,11 b384,656,675,655,677,11 b397,674,677,671,683,12 b410,675,684,674,692,11 r423,679,684,677,690,11 b436,684,685,684,685,11 b449,662,665,658,672,12 b241,705,708,705,708,5',
    marks: 's34@241,450 u@241,455 uf@241,473 u@241,516 b24@241,544 uf@241,549 d@241,568 s34@241,597 df@241,601 u@241,620 b19@241,648 d@241,653 s18@241,682 df@241,686 uf@345,436 b4@345,463 u@345,466 uf@345,485 b24@345,512 u@345,516 df@345,535 s36@345,562 d@345,566 uf@345,585 b26@345,612 u@345,616 d@345,683 s34@345,713 s36@293,499 d@293,502 df@293,539 -1@293,567 u@306,542 b4@306,570 uf@306,575 1@306,603 -1@319,482 df@319,486 s13@319,513 d@319,517 df@332,495 s18@332,522 d@332,526 u@332,546 b28@332,574 uf@332,579 -1@332,607 -1@397,618 df@397,622 s12@397,649 d@397,653 b4@449,636 hu@449,639',
    title: [232, 'KP200 선물연결 $$$$$%%% 24번 KB200연결선물 6'], badge: 194, mini: 506, hl: [410, 474, '4,23'], x: '03@241 04@345 05@449', xy: 727, ys: '360,00@539 350,00@652', price: [531, 652, '348,60', '1,80'],
    notes: [[261, 491, '364,00 (09/03 09:45)', RED], [274, 698, '346,10 (09/04 14:45)', BLUE]], arrows: [[256, 242, 488, RED], [397, 411, 696, BLUE]] },
  c2: { box: [587, 155, 394, 284], axis: [922, 417], h: [237, 355], v: [655, 753, 850], ticks: [],
    lines: [['red', '588,203 620,203', 1], ['blue', '620,203 655,203 692,222 740,246', 1], ['blue', '741,248 752,359', 1]],
    candles: 'r595,213,222,211,223,11 r607,209,214,207,215,11 r619,203,211,199,211,11 b631,203,211,202,213,11 r643,205,206,205,206,11 b655,203,204,190,213,11 b668,203,215,203,215,11 r680,211,215,206,218,11 b692,211,224,209,230,11 b704,223,233,220,235,11 b716,232,240,230,240,11 b728,239,242,236,246,11 b740,246,247,242,251,11 b753,359,372,340,372,11 r765,351,372,345,372,11 b777,351,364,347,364,11 b789,362,372,362,372,11 b850,366,370,366,370,1',
    marks: 'd@619,213 s12@619,242 df@619,246 -1@619,274 u@655,216 b16@655,245 uf@655,249 1@655,277 d@692,232 s4@691,261 df@692,265 -1@692,293 u@704,240 b15@704,268 uf@704,273 1@704,301 s4@716,209 d@716,212 df@716,244 -1@716,272 u@728,249 b4@728,277 uf@728,282 1@728,310 s18@740,224 d@740,228 u@740,248 b16@740,277 uf@740,281 df@740,300 1@740,328 1@753,237 df@753,241 s19@753,268 d@753,272 uf@753,291 b6@753,319 u@753,322 -1@765,293 df@765,296 s4@765,323 d@765,327 s7@850,313 hd@850,316 b15@850,344 hu@850,347',
    title: [625, '미니KP200 선물연결 $$$$$%%% 20번 국내 미니선물 60분'], badge: 587, hl: [807, 871, '4,22'], x: '03@655', xy: 435, ys: '',
    notes: [[675, 190, '364,00 (09/03 09:45)', RED], [678, 407, '346,10 (09/04 14:15)', BLUE]], arrows: [[670, 655, 187, RED]] },
  c3: { box: [587, 443, 394, 289], axis: [922, 710], h: [527, 647], v: [617, 742, 805, 868], solid: 680, ticks: [707],
    lines: [['blue', '587,506 617,497', 1], ['red', '617,497 685,513 735,496', 1], ['red', '782,547 805,655', 1], ['blue', '807,662 843,692 860,685', 1]],
    candles: 'b599,511,517,508,519,7 r608,507,517,505,517,7 b617,496,498,486,508,9 r626,491,497,479,498,7 r635,491,492,485,495,7 b644,491,493,489,496,7 r653,487,494,484,495,7 b662,486,491,478,492,7 b671,490,493,488,494,7 b680,503,531,489,547,7 r689,513,532,502,532,7 r698,506,514,505,517,7 r707,500,507,497,508,7 r716,494,501,491,503,7 b725,494,497,488,499,7 r734,495,497,492,500,8 b742,492,498,478,499,7 b805,651,662,632,683,7 r814,647,662,637,674,7 b823,648,660,643,664,7 b832,659,674,658,683,7 b841,673,692,671,693,7 r850,685,692,676,692,7 r859,685,686,678,692,8 b868,662,665,658,674,7',
    marks: 'd@617,510 s17@617,539 df@617,543 u@617,562 b19@617,591 uf@617,595 -1@617,623 u@689,533 b16@689,562 uf@689,566 1@689,594 d@725,501 s8@725,531 df@725,534 -1@725,562 u@734,504 b4@734,534 uf@734,537 1@734,565 d@742,505 s15@744,534 df@742,538 -1@742,566 uf@751,540 1@751,567 -1@768,549 u@778,549 b15@778,577 uf@778,582 -1@778,610 1@805,579 uf@805,583 b11@804,611 u@805,614 -1@841,618 df@841,622 s4@841,650 d@841,653 1@859,625 uf@859,629 b13@859,656 u@859,660',
    title: [625, '미니KP200 선물연결 $$$$$%%%'], badge: 587, x: '30@617 S@680 03@742 04@805 05@868', xy: 727, ys: '', price: [928, 652, '348,64', '1,84'],
    notes: [[682, 478, '364,10 (08/30 09:15)', RED], [706, 700, '346,10 (09/04 14:15)', BLUE]], arrows: [[677, 662, 475, RED], [827, 842, 698, BLUE]] }
};

const text = (x, y, s, fill = '#000', anchor = 'start', cls = '') => `<text x="${x}" y="${y}" fill="${fill}" text-anchor="${anchor}" class="${cls}">${s}</text>`;
const poly = (pts, stroke, w, dash) => `<polyline points="${pts}" fill="none" stroke="${stroke}" stroke-width="${w}"${dash ? ' stroke-dasharray="3 3"' : ''} shape-rendering="crispEdges"/>`;
const rect = (x, y, w, h, fill, extra = '') => `<rect x="${x}" y="${y}" width="${w}" height="${h}" fill="${fill}" ${extra}/>`;

function draw(p) {
  const [L, T, W, H] = p.box, [ax, ay] = p.axis;
  const colour = { red: RED, blue: BLUE, green: '#008000' };
  let s = '';
  for (const y of p.h) s += poly(`${L},${y + .5} ${ax + 5},${y + .5}`, '#bbb', 1, 1) + poly(`${ax},${y + .5} ${ax + 5},${y + .5}`, '#000', 1);
  for (const x of p.v) s += poly(`${x + .5},${T} ${x + .5},${ay}`, '#bbb', 1, 1) + poly(`${x + .5},${ay} ${x + .5},${ay + 4}`, '#000', 1);
  if (p.solid) s += poly(`${p.solid + .5},${T} ${p.solid + .5},${ay}`, '#bbb', 1) + poly(`${p.solid + .5},${ay} ${p.solid + .5},${ay + 4}`, '#000', 1);
  for (const y of p.ticks) s += poly(`${ax},${y + .5} ${ax + 3},${y + .5}`, '#000', 1);
  const clip = 'clip' + L + '-' + T;
  s += `<clipPath id="${clip}"><rect x="${L}" y="${T}" width="${ax - L}" height="${ay - T}"/></clipPath><g clip-path="url(#${clip})">`;
  for (const [c, pts, dash] of p.lines || []) s += poly(pts, colour[c], 1, dash);
  for (const [c, pts] of p.thick || []) s += poly(pts, c === 'r' ? RED : BLUE, 3);
  for (const tok of p.candles.split(' ').filter(Boolean)) {
    const [x, a, b, wa, wb, w = 3] = tok.slice(1).split(',').map(Number), fill = tok[0] === 'r' ? RED : BLUE;
    s += rect(x, wa, 1, wb - wa, fill) + rect(x - Math.floor(w / 2), a, w, Math.max(1, b - a), fill);
  }
  for (const [c, pts, dash] of p.over || []) s += poly(pts, colour[c], 1, dash);
  for (const tok of p.marks.split(' ').filter(Boolean)) {
    const [name, at] = tok.split('@'), [x, y] = at.split(',').map(Number);
    const hollow = { hu: ['m-u', RED], hd: ['m-d', BLUE] }[name];
    if (hollow) s += `<use href="#${hollow[0]}" transform="translate(${x + .5} ${y + .5})" fill="#fff" stroke="${hollow[1]}"/>`;
    else if (/^(uf?|uk|df?)$/.test(name)) s += `<use href="#m-${name === 'uk' ? 'u' : name}" transform="translate(${x + .5} ${y})" fill="${name === 'uk' ? '#800000' : name[0] === 'u' ? RED : BLUE}"/>`;
    else s += text(x, y, name, '#000', 'middle');
  }
  for (const [x, y, c] of p.stops || []) s += `<circle cx="${x + .5}" cy="${y}" r="7" fill="${c}"/>` + text(x + .5, y + 4, 'S', '#fff', 'middle', 'bold');
  if (p.title) s += text(p.title[0], T + 12, p.title[1].replace(/ {2}/g, ' \u00a0'), '#000', 'start', 'title');
  s += '</g>';
  if (p.badge) s += rect(p.badge, T, 21, 14, '#ff6464', 'stroke="#b33"') + text(p.badge + 10, T + 11, '자동', '#fff', 'middle') + rect(p.badge + 22, T, 10, 14, '#ddd', 'stroke="#999"') + text(p.badge + 27, T + 11, '×', '#000', 'middle', 'bold');
  if (p.mini) s += rect(p.mini + .5, T + 2.5, 7, 7, '#fff', 'stroke="#555"') + rect(p.mini + 7.5, T + 2.5, 7, 7, '#fff', 'stroke="#555"') + `<path d="M${p.mini + 9} ${T + 5}h5l-2.500 3z"/>`;
  if (p.hl) s += text(p.hl[0], T + 23, `H: -${p.hl[2]}%`, RED) + text(p.hl[1], T + 23, 'L: 0,72%', BLUE);
  for (const [x, y, str, c] of p.notes) s += text(x, y, str, c);
  for (const [x0, x1, y, c] of p.arrows) { const k = Math.sign(x1 - x0); s += poly(`${x0},${y + .5} ${x1},${y + .5}`, c, 1) + poly(`${x1},${y + .5} ${x1 - 4 * k},${y + (k > 0 ? 4 : -3)}`, c, 1); }
  s += poly(`${ax + .5},${T} ${ax + .5},${ay + .5} ${L},${ay + .5}`, '#000', 1);
  for (const tok of p.x.split(' ').filter(Boolean)) { const [l, x] = tok.split('@'); s += text(x, p.xy, l, '#000', 'middle', /S/.test(l) ? 'bold' : ''); }
  for (const tok of p.ys.split(' ').filter(Boolean)) { const [l, y] = tok.split('@'); s += text(ax + 9, y, l); }
  if (p.price) { const [x, y, v, d] = p.price; s += rect(x, y, 34, 12, RED) + text(x + 17, y + 10, v, '#fff', 'middle') + `<path d="M${x + 1} ${y + 20}l4-5 4 5z" fill="${RED}"/>` + text(x + 34, y + 22, d, RED, 'end'); }
  return `<svg width="${W}" height="${H}" viewBox="${L} ${T} ${W} ${H}">${s}</svg>`;
}

for (const el of document.querySelectorAll('[data-pane]')) {
  el.insertAdjacentHTML('afterbegin', draw(panes[el.dataset.pane]));
  if (el.dataset.time) el.insertAdjacentHTML('beforeend', `<div class="pane-tools"><button aria-label="그리기"><svg width="13" height="13"><use href="#i-pencil"/></svg></button><button aria-label="확대"><svg width="13" height="13"><use href="#i-mag"/></svg></button><time>${el.dataset.time}</time></div>`);
}

document.getElementById('strategy').innerHTML =
  '<tr class="alt"><td class="on">자동<td>X<td class="wide">200연결선물 60분차<td>1000-1272-31<td>KP200 선물연결<td>(60분)<td class="blue">매도<td>-1<td>-2<td class="close">OnClose &gt;&gt;<td>모든 신호<td>현재가</tr>' +
  '<tr><td class="test">시험<td>X<td class="wide">구 open 으로하면 n<td>1000-1272-31<td>미니KP200 선물연<td>(일간)<td>포지션 없음<td>0<td>0<td>-<td>모든 신호<td>현재가</tr>' +
  Array.from({ length: 10 }, (_, i) => `<tr class="${Math.floor(i / 2) % 2 ? 'alt' : ''}">${'<td></td>'.repeat(11)}<td>현재가</td></tr>`).join('');

document.getElementById('hold').innerHTML = `<tr>${'<td></td>'.repeat(7)}</tr>`.repeat(8);

document.getElementById('fills').innerHTML = ['08:55:01', '08:54:00', '08:52:49', '08:52:25', '08:51:38'].map((t, i) =>
  `<tr class="${i === 0 || i > 2 ? 'even' : ''}"><td>${t}<td><td><td>접수오류<td colspan="3">(주문가격이 하한가 미만입니다, 0,00)</tr>`).join('');

// Price ladder: shade per level, sell side above and buy side below the last price.
const px = (v, bg, cls = '') => `<td class="px ${cls}" style="background:${bg}">${v}</td>`;
const top5 = [['374,50', '#fff', '기준가', '346,80', ''], ['349,05', '#f8fcfe', '실상한가', '352,05', 'red'], ['349,00', '#edf5f9', '실하한가', '345,15', 'blue'], ['348,95', '#ecf4f8', '', '', ''], ['348,90', '#e6eff5', '', '', '']];
const asks = [[30, 51, '348,85', '#e0eef4', '시가', '348,70', 53], [27, 81, '348,80', '#daeaf1', '고가', '349,05', 87], [29, 42, '348,75', '#d5e6ef', '저가', '347,80', 44], [22, 36, '348,70', '#d0e2ed', '예체가', '', 38], [2, 2, '348,65', '#c9dde9', '예체량', '', 1]];
const bids = [['KP200종합', '346,66', '348,60', '#fbc2c0', 6, 6, 6], ['', '(0,00)', '348,55', '#fbc8c4', 21, 16, 21], ['베이시스', '1,94', '348,50', '#fdcfce', 44, 22, 46], ['미결제', '257,676', '348,45', '#fedbd9', 37, 19, 39], ['증감', '(+1,924)', '348,40', '#ffe3e3', 39, 20, 41]];
const rest = [['348,35', '#fee7e5'], ['348,30', '#ffefed'], ['348,25', '#fff6f5'], ['348,20', '#fffbfb'], ['319,10', '#fff']];
const candles = `<svg width="178" height="100"><g fill="${RED}"><rect x="3" y="14" width="33" height="2"/><rect x="19" y="8" width="1" height="13"/><rect x="38" y="15" width="33" height="4"/><rect x="54" y="12" width="1" height="24"/></g><g fill="${BLUE}"><rect x="73" y="13" width="33" height="20"/><rect x="89" y="8" width="1" height="6"/><rect x="108" y="82" width="33" height="12"/><rect x="124" y="71" width="1" height="26"/><rect x="143" y="84" width="33" height="1"/><rect x="159" y="82" width="1" height="6"/></g></svg>`;
document.getElementById('ladder').innerHTML =
  top5.map((r, i) => `<tr class="${i < 4 ? 'tall' : ''}"><td class="v ${i === 4 ? 'bb' : ''}"><td class="mid ${i === 4 ? 'bb' : ''}">${i ? '' : '상한가'}</td>${px(r[0], r[1], i === 4 ? 'bb' : '')}<td class="l">${r[2]}<td class="${r[4]}">${r[3]}</tr>`).join('') +
  asks.map((r, i) => `<tr class="${i === 4 ? 'line' : ''}"><td class="v">${r[0]}<td class="bar pad" style="--c:#e2eff5;--side:right;--w:${r[6]}px">${r[1]}</td>${px(r[2], r[3])}<td class="l">${r[4]}<td class="red">${r[5]}</tr>`).join('') +
  bids.map((r, i) => `<tr><td class="l">${r[0]}<td class="${i === 4 ? 'red' : ''}">${r[1]}</td>${px(r[2], r[3], (i ? '' : 'now') + (i === 4 ? ' bb' : ''))}<td class="bar v pad ${i === 4 ? 'bb' : ''}" style="--c:#ffe9e8;--side:left;--w:${r[6]}px">${r[4]}<td class="${i === 4 ? 'bb' : ''}">${r[5]}</tr>`).join('') +
  rest.map((r, i) => `<tr>${i === 0 ? '<td class="bb"></td><td class="bb"></td>' : i === 1 ? `<td colspan="2" rowspan="4" class="candles">${candles}</td>` : ''}${px(r[0], r[1], i === 4 ? 'low' : '')}<td class="v mid">${i === 4 ? '하한가' : ''}<td></tr>`).join('');
```
